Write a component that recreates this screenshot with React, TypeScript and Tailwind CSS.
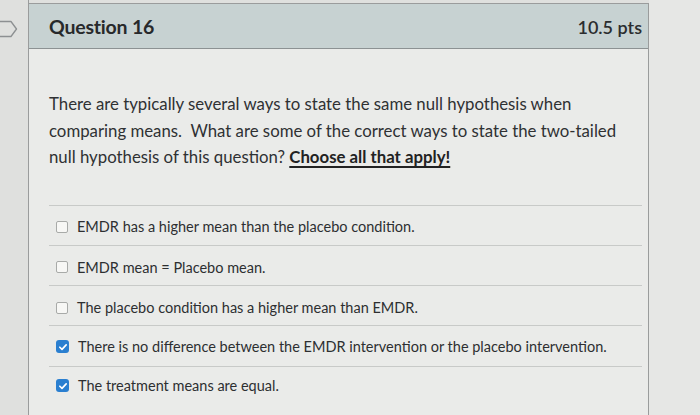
import React from 'react';

const options = [
  { text: 'EMDR has a higher mean than the placebo condition.', checked: false, pad: 'pt-[4px]' },
  { text: 'EMDR mean = Placebo mean.', checked: false, pad: 'pt-[4px]' },
  { text: 'The placebo condition has a higher mean than EMDR.', checked: false, pad: 'pt-[4px]' },
  { text: 'There is no difference between the EMDR intervention or the placebo intervention.', checked: true, pad: 'pt-[1px]' },
  { text: 'The treatment means are equal.', checked: true, pad: 'pt-0 pb-[2px]' },
];

function Checkbox({ checked }: { checked: boolean }) {
  if (checked) {
    return (
      <span className="flex h-[13px] w-[13px] items-center justify-center rounded-[3px] bg-[#2a7fd0]">
        <svg viewBox="0 0 12 12" className="h-[10px] w-[10px]">
          <path d="M2.2 6.3 L4.8 8.8 L9.8 3.4" fill="none" stroke="white" strokeWidth="2" strokeLinecap="round" strokeLinejoin="round" />
        </svg>
      </span>
    );
  }
  return <span className="h-[12px] w-[12px] rounded-[2px] border border-[#a8aaa8] bg-[#f7f7f5]" />;
}

export default function App() {
  return (
    <div className="flex h-[415px] w-[700px] overflow-hidden bg-[#dfe0de] font-['Lato',sans-serif] text-[#2d2f31]">
      <div className="relative w-[29px] shrink-0 border-r border-[#9a9c9c]">
        <svg viewBox="0 0 20 18" className="absolute left-[-2px] top-[20px] h-[18px] w-[20px]">
          <path d="M0 1.5 H13 L18.5 9 L13 16.5 H0" fill="none" stroke="#8d9092" strokeWidth="1.3" strokeLinejoin="round" />
        </svg>
      </div>
      <div className="mt-[3px] flex w-[620px] shrink-0 flex-col border-t border-r border-[#9a9c9c] bg-[#eaebe9]">
        <div className="flex h-[45px] items-center justify-between border-b border-[#8c9293] bg-[#c7d2d2] pl-[20px] pr-[6px] pt-[2px]">
          <span className="text-[19.5px] font-bold tracking-[-0.2px] text-[#27292b]">Question 16</span>
          <span className="text-[18px] font-semibold text-[#2b2d2f]">10.5 pts</span>
        </div>
        <div className="pl-[20px] pr-[6px] pt-[42px]">
          <p className="pr-[14px] text-[16.8px] leading-[26.5px] text-[#2f3133]">
            There are typically several ways to state the same null hypothesis when comparing means.&nbsp; What are some of the correct ways to state the two-tailed null hypothesis of this question?{' '}
            <span className="font-bold text-[#222] underline decoration-[1.5px] underline-offset-[3px]">Choose all that apply!</span>
          </p>
          <div className="mt-[34px] border-t border-[#c8cac8]">
            {options.map((opt) => (
              <div key={opt.text} className={`flex h-[40.3px] items-center gap-[9px] border-b border-[#c8cac8] pl-[7px] last:border-b-0 ${opt.pad}`}>
                <Checkbox checked={opt.checked} />
                <span className="text-[14.5px] text-[#2d2f31]">{opt.text}</span>
              </div>
            ))}
          </div>
        </div>
      </div>
      <div className="flex-1 bg-[#e6e7e5]" />
    </div>
  );
}
